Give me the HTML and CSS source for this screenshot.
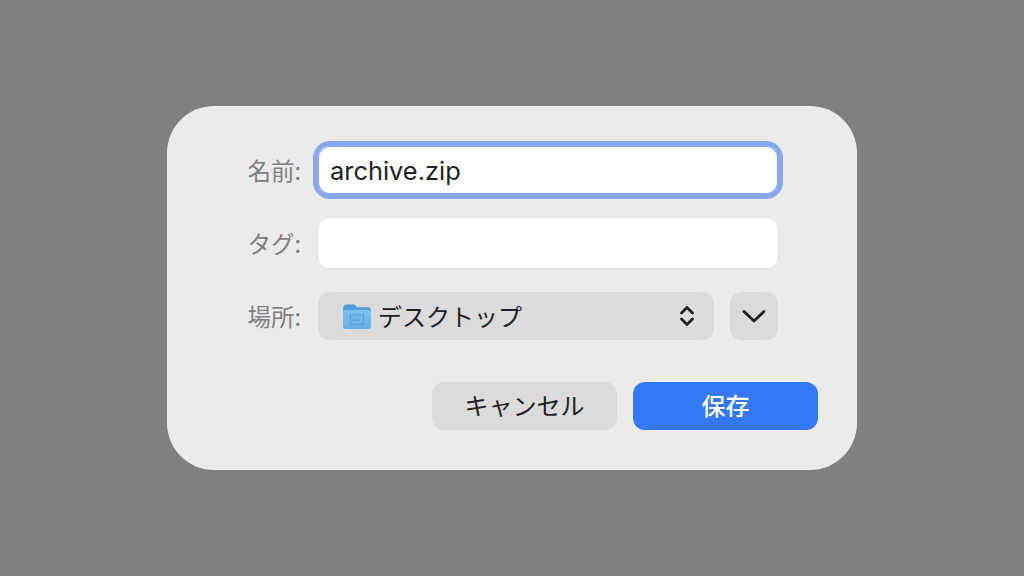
FILE: index.html
```html
<!DOCTYPE html>
<html>

	<head>
		<meta charset="UTF-8">
		<title>保存</title>
		<link rel="stylesheet" href="styles.css">
	</head>

	<body>

		<div class="dialog">
			<div class="row">
				<div class="label">名前:</div>
				<div class="field focused">archive.zip</div>
			</div>
			<div class="row">
				<div class="label">タグ:</div>
				<div class="field tags"></div>
			</div>
			<div class="row">
				<div class="label">場所:</div>
				<div class="place">
					<svg class="folder" width="30" height="27" viewBox="0 0 30 27">
						<defs>
							<linearGradient id="front" x1="0" y1="0" x2="0" y2="1">
								<stop offset="0" stop-color="#7cc2f0"/>
								<stop offset="1" stop-color="#62aee4"/>
							</linearGradient>
						</defs>
						<path d="M1 6C1 3 2.200 1.500 4.500 1.500H11C12.500 1.500 13.200 2 14 3L15 4.200H26C28 4.200 29 5.400 29 7.500V10H1Z" fill="#4d9ede"/>
						<path d="M1 8.500C1 7.500 1.700 7 2.500 7H27.500C28.300 7 29 7.500 29 8.500V23C29 25 28 26 26 26H4C2 26 1 25 1 23Z" fill="url(#front)"/>
						<rect x="8.500" y="12" width="13" height="9.500" fill="none" stroke="#5a9ccd" stroke-width="1"/>
						<rect x="11.500" y="16.500" width="7" height="1.200" fill="#5a9ccd"/>
					</svg>
					<span class="place-name">デスクトップ</span>
					<svg class="updown" width="16" height="24" viewBox="0 0 16 24">
						<path d="M2.500 9L8 3.500L13.500 9M2.500 15L8 20.500L13.500 15" fill="none" stroke="#222" stroke-width="2.800" stroke-linecap="round" stroke-linejoin="round"/>
					</svg>
				</div>
				<div class="expand">
					<svg width="24" height="14" viewBox="0 0 24 14">
						<path d="M2 2.500L12 12L22 2.500" fill="none" stroke="#222" stroke-width="2.900" stroke-linecap="round" stroke-linejoin="round"/>
					</svg>
				</div>
			</div>
			<div class="btns">
				<div class="btn cancel">キャンセル</div>
				<div class="btn save">保存</div>
			</div>
		</div>

	</body>

</html>
```

FILE: styles.css
```css
body {
	margin: 0;
	width: 1024px;
	height: 576px;
	background-color: #808080;
	display: flex;
	align-items: center;
	justify-content: center;
	font-family: "Inter", "Noto Sans CJK JP", sans-serif;
	overflow: hidden;
}

.dialog {
	width: 690px;
	height: 364px;
	box-sizing: border-box;
	padding: 40px 39px 40px 0;
	background-color: #ebebeb;
	border-radius: 47px;
	display: flex;
	flex-direction: column;
	gap: 24px;
}

.row {
	display: flex;
	align-items: center;
	padding-right: 40px;
}

.label {
	width: 134px;
	margin-right: 17px;
	padding-bottom: 1px;
	text-align: right;
	font-family: "Noto Sans CJK JP", sans-serif;
	font-size: 23.5px;
	color: #7f7f7f;
}

.field {
	flex: 1;
	height: 48px;
	box-sizing: border-box;
	padding-left: 12px;
	background-color: #fff;
	border-radius: 12px;
	font-size: 25.400px;
	line-height: 50px;
	color: #222;
}

.focused {
	box-shadow: 0 0 0 5px #87a8ec, inset 0 0 0 1px #87a8ec;
}

.tags {
	height: 50px;
	box-shadow: 0 0 0 1px #e4e4e4;
}

.place {
	flex: 1;
	height: 48px;
	padding: 0 19px 0 24px;
	background-color: #dbdbdb;
	border-radius: 12px;
	display: flex;
	align-items: center;
}

.folder {
	margin-right: 6px;
}

.place-name {
	flex: 1;
	padding-bottom: 2px;
	font-family: "Noto Sans CJK JP", sans-serif;
	font-size: 24px;
	color: #222;
}

.expand {
	width: 48px;
	height: 48px;
	margin-left: 16px;
	background-color: #dbdbdb;
	border-radius: 12px;
	display: flex;
	align-items: center;
	justify-content: center;
}

.btns {
	display: flex;
	justify-content: flex-end;
	gap: 16px;
	margin-top: 18px;
}

.btn {
	width: 185px;
	height: 48px;
	border-radius: 12px;
	text-align: center;
	font-family: "Noto Sans CJK JP", sans-serif;
	font-size: 24px;
	line-height: 46px;
}

.cancel {
	background-color: #dbdbdb;
	color: #222;
}

.save {
	background-color: #3478f6;
	color: #fff;
	font-weight: 500;
}
```
